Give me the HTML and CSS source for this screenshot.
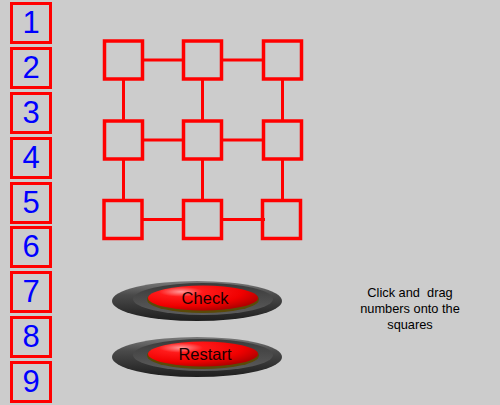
FILE: index.html
```html
<!DOCTYPE html>
<html>
<head>
<meta charset="utf-8">
<link rel="stylesheet" href="styles.css">
</head>
<body>
<div class="page">
  <div class="tray">
    <div class="tile">1</div>
    <div class="tile">2</div>
    <div class="tile">3</div>
    <div class="tile">4</div>
    <div class="tile">5</div>
    <div class="tile">6</div>
    <div class="tile">7</div>
    <div class="tile">8</div>
    <div class="tile">9</div>
  </div>
  <div class="main">
    <svg class="board" width="210" height="210" viewBox="0 0 210 210">
      <g stroke="#ff0000" stroke-width="3" fill="none">
        <line x1="43" y1="24" x2="85" y2="24"/>
        <line x1="122" y1="24" x2="165" y2="24"/>
        <line x1="43" y1="104" x2="85" y2="104"/>
        <line x1="122" y1="104" x2="165" y2="104"/>
        <line x1="43" y1="183.5" x2="85" y2="183.5"/>
        <line x1="122" y1="183.5" x2="165" y2="183.5"/>
        <line x1="23.5" y1="43" x2="23.5" y2="86"/>
        <line x1="23.5" y1="122" x2="23.5" y2="166"/>
        <line x1="102.5" y1="43" x2="102.5" y2="86"/>
        <line x1="102.5" y1="122" x2="102.5" y2="166"/>
        <line x1="182.5" y1="43" x2="182.5" y2="86"/>
        <line x1="182.5" y1="122" x2="182.5" y2="166"/>
      </g>
      <g stroke="#ff0000" stroke-width="3.5" fill="none">
        <rect x="4.5" y="5" width="38" height="38"/>
        <rect x="83.5" y="5" width="38" height="38"/>
        <rect x="163.5" y="5" width="38" height="38"/>
        <rect x="4.5" y="85" width="38" height="38"/>
        <rect x="83.5" y="85" width="38" height="38"/>
        <rect x="163.5" y="85" width="38" height="38"/>
        <rect x="4" y="164.5" width="38" height="38"/>
        <rect x="83.5" y="164.5" width="38" height="38"/>
        <rect x="162.5" y="164.5" width="38" height="38"/>
      </g>
    </svg>
    <div class="controls">
      <div class="buttons">
        <svg class="btn" width="172" height="42" viewBox="0 0 172 42">
          <defs>
            <linearGradient id="outer" x1="0" y1="0" x2="0" y2="1">
              <stop offset="0" stop-color="#7a7a7a"/>
              <stop offset="0.35" stop-color="#4a4a4a"/>
              <stop offset="1" stop-color="#1e1e1e"/>
            </linearGradient>
            <linearGradient id="ring" x1="0" y1="0" x2="0" y2="1">
              <stop offset="0" stop-color="#3a3a3a"/>
              <stop offset="1" stop-color="#5c5c5c"/>
            </linearGradient>
            <radialGradient id="red" cx="0.3" cy="0.25" r="0.8">
              <stop offset="0" stop-color="#ff9a9a"/>
              <stop offset="0.25" stop-color="#ff1a1a"/>
              <stop offset="0.7" stop-color="#f00000"/>
              <stop offset="1" stop-color="#b00000"/>
            </radialGradient>
          </defs>
          <ellipse cx="86" cy="21" rx="85" ry="20" fill="url(#outer)"/>
          <ellipse cx="92" cy="19" rx="70" ry="16" fill="url(#ring)"/>
          <ellipse cx="92" cy="19.5" rx="56" ry="13.5" fill="#5a4a08"/>
          <ellipse cx="92" cy="18" rx="55" ry="12.5" fill="url(#red)"/>
          <text x="94" y="24" text-anchor="middle" class="label">Check</text>
        </svg>
        <svg class="btn" width="172" height="42" viewBox="0 0 172 42">
          <ellipse cx="86" cy="21" rx="85" ry="20" fill="url(#outer)"/>
          <ellipse cx="92" cy="19" rx="70" ry="16" fill="url(#ring)"/>
          <ellipse cx="92" cy="19.5" rx="56" ry="13.5" fill="#5a4a08"/>
          <ellipse cx="92" cy="18" rx="55" ry="12.5" fill="url(#red)"/>
          <text x="94" y="24" text-anchor="middle" class="label">Restart</text>
        </svg>
      </div>
      <div class="hint">Click and&nbsp; drag numbers onto the squares</div>
    </div>
  </div>
</div>
</body>
</html>
```

FILE: styles.css
```css
html, body {
  margin: 0;
  padding: 0;
  background: #cccccc;
  width: 500px;
  height: 405px;
  overflow: hidden;
  font-family: "Liberation Sans", Arial, sans-serif;
}
.page {
  display: flex;
  padding-left: 10px;
}
.tray {
  display: flex;
  flex-direction: column;
  gap: 2.875px;
  padding-top: 2px;
}
.tile {
  box-sizing: border-box;
  width: 42px;
  height: 42px;
  border: 3px solid #ff0000;
  color: #0000ff;
  font-size: 31px;
  line-height: 36px;
  text-align: center;
}
.main {
  margin-left: 48px;
  display: flex;
  flex-direction: column;
}
.board {
  display: block;
  margin-top: 36px;
}
.controls {
  display: flex;
  margin-top: 34px;
}
.buttons {
  display: flex;
  flex-direction: column;
  gap: 14px;
  margin-left: 11px;
}
.btn {
  display: block;
}
.label {
  font-family: "Liberation Sans", Arial, sans-serif;
  font-size: 16.5px;
  fill: #1a0000;
}
.hint {
  width: 112px;
  margin-left: 71px;
  margin-top: 5px;
  font-size: 12.8px;
  line-height: 16px;
  text-align: center;
  color: #000000;
}
```
